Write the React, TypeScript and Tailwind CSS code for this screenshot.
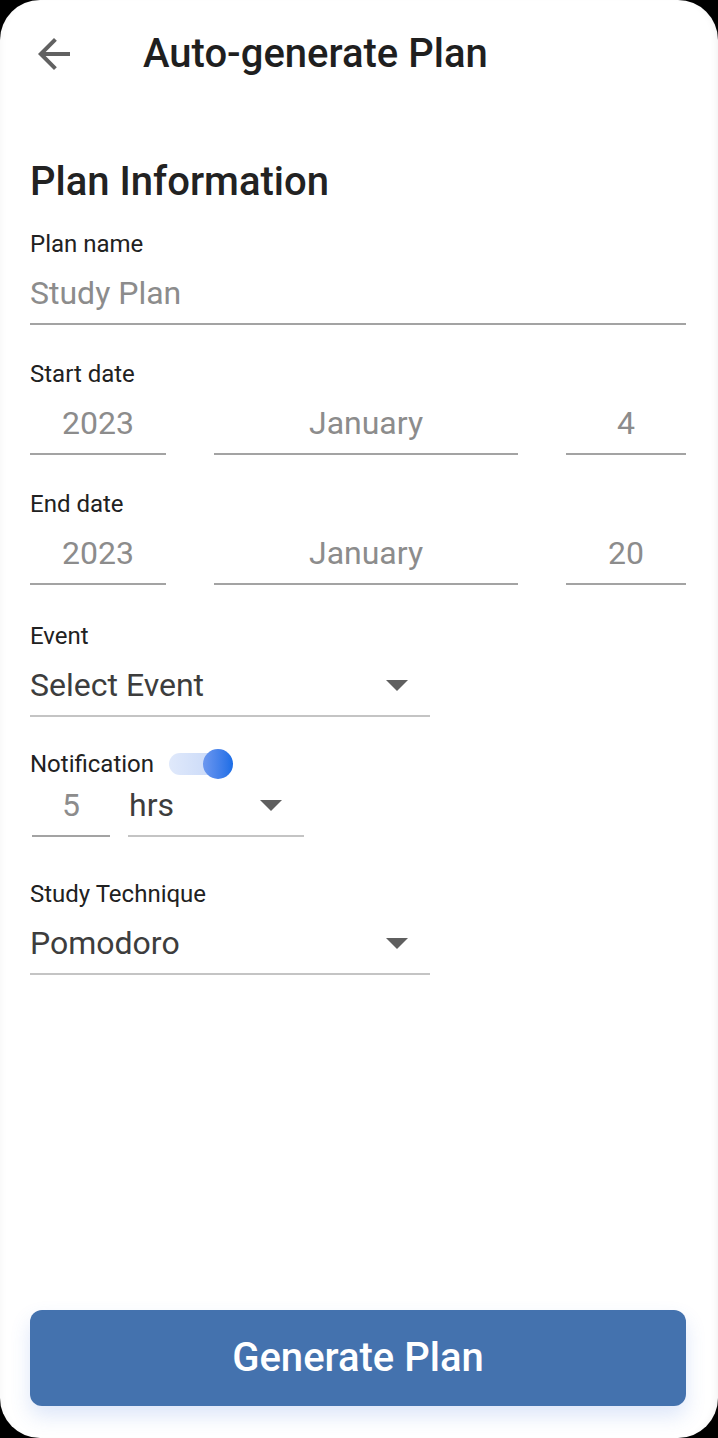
import React from "react";

const font = { fontFamily: "Roboto, 'Noto Sans', 'Liberation Sans', sans-serif" };

function Caret() {
  return (
    <svg width="22" height="11" viewBox="0 0 22 11" className="shrink-0">
      <path d="M0 0 L22 0 L11 11 Z" fill="#5f5f5f" />
    </svg>
  );
}

function Label({ children }: { children: React.ReactNode }) {
  return <div className="h-[28px] text-[24px] leading-[28px] text-[#212121]">{children}</div>;
}

function TextValue({ children, w, center }: { children: React.ReactNode; w: string; center?: boolean }) {
  return (
    <div className={`${w} pt-[15px] pb-[10px] border-b-2 border-[#a3a3a3]`}>
      <div className={`h-[40px] leading-[40px] text-[32px] text-[#8c8c8c] ${center ? "text-center" : ""}`}>{children}</div>
    </div>
  );
}

function SelectValue({ children, w }: { children: React.ReactNode; w: string }) {
  return (
    <div className={`${w} pt-[15px] pb-[10px] border-b-2 border-[#c4c4c4] flex items-center justify-between pr-[22px]`}>
      <div className="h-[40px] leading-[40px] text-[32px] text-[#3d3d3d]">{children}</div>
      <Caret />
    </div>
  );
}

export default function App() {
  return (
    <div className="bg-black w-[718px] h-[1438px]" style={font}>
      <div className="bg-white w-[718px] h-[1438px] rounded-[40px] flex flex-col shadow-[inset_-6px_0_8px_-6px_rgba(0,0,0,0.08),inset_6px_0_8px_-6px_rgba(0,0,0,0.05)]">
        {/* header */}
        <div className="h-[108px] flex items-center">
          <div className="ml-[30px] w-[48px] h-[48px] flex items-center justify-center">
            <svg width="48" height="48" viewBox="0 0 24 24">
              <path d="M20 11H7.83l5.59-5.59L12 4l-8 8 8 8 1.41-1.41L7.83 13H20v-2z" fill="#616161" />
            </svg>
          </div>
          <div className="ml-[65px] text-[40px] font-medium text-[#1f1f1f] leading-[48px]">Auto-generate Plan</div>
        </div>

        <div className="pl-[30px] pr-[32px] mt-[50px]">
          <div className="text-[40px] font-medium text-[#222] leading-[48px] h-[48px]">Plan Information</div>

          <div className="mt-[24px]">
            <Label>Plan name</Label>
            <TextValue w="w-full">Study Plan</TextValue>
          </div>

          <div className="mt-[35px]">
            <Label>Start date</Label>
            <div className="flex gap-[48px]">
              <TextValue w="w-[136px]" center>2023</TextValue>
              <TextValue w="w-[304px]" center>January</TextValue>
              <TextValue w="w-[120px]" center>4</TextValue>
            </div>
          </div>

          <div className="mt-[35px]">
            <Label>End date</Label>
            <div className="flex gap-[48px]">
              <TextValue w="w-[136px]" center>2023</TextValue>
              <TextValue w="w-[304px]" center>January</TextValue>
              <TextValue w="w-[120px]" center>20</TextValue>
            </div>
          </div>

          <div className="mt-[37px]">
            <Label>Event</Label>
            <SelectValue w="w-[400px]">Select Event</SelectValue>
          </div>

          <div className="mt-[33px]">
            <div className="flex items-center h-[28px]">
              <Label>Notification</Label>
              <div className="ml-[15px] relative w-[64px] h-[30px] flex items-center">
                <div className="w-[58px] h-[22px] rounded-full bg-gradient-to-r from-[#e0e9fb] to-[#c3d5f7]" />
                <div className="absolute right-0 top-0 w-[30px] h-[30px] rounded-full bg-gradient-to-r from-[#6b97ef] to-[#1a6de6]" />
              </div>
            </div>
            <div className="flex ml-[2px] gap-[18px]">
              <div className="w-[78px] pt-[7px] pb-[10px] border-b-2 border-[#a3a3a3]">
                <div className="h-[40px] leading-[40px] text-[32px] text-[#8c8c8c] text-center">5</div>
              </div>
              <div className="w-[176px] pt-[7px] pb-[10px] border-b-2 border-[#c4c4c4] flex items-center justify-between pl-[1px] pr-[22px]">
                <div className="h-[40px] leading-[40px] text-[32px] text-[#3d3d3d]">hrs</div>
                <Caret />
              </div>
            </div>
          </div>

          <div className="mt-[43px]">
            <Label>Study Technique</Label>
            <SelectValue w="w-[400px]">Pomodoro</SelectValue>
          </div>
        </div>

        <div className="mt-auto pl-[30px] pr-[32px] pb-[32px]">
          <button className="w-full h-[96px] rounded-[12px] bg-[#4472ae] text-white text-[40px] font-medium shadow-[0_10px_20px_rgba(68,114,220,0.18)]">
            Generate Plan
          </button>
        </div>
      </div>
    </div>
  );
}
